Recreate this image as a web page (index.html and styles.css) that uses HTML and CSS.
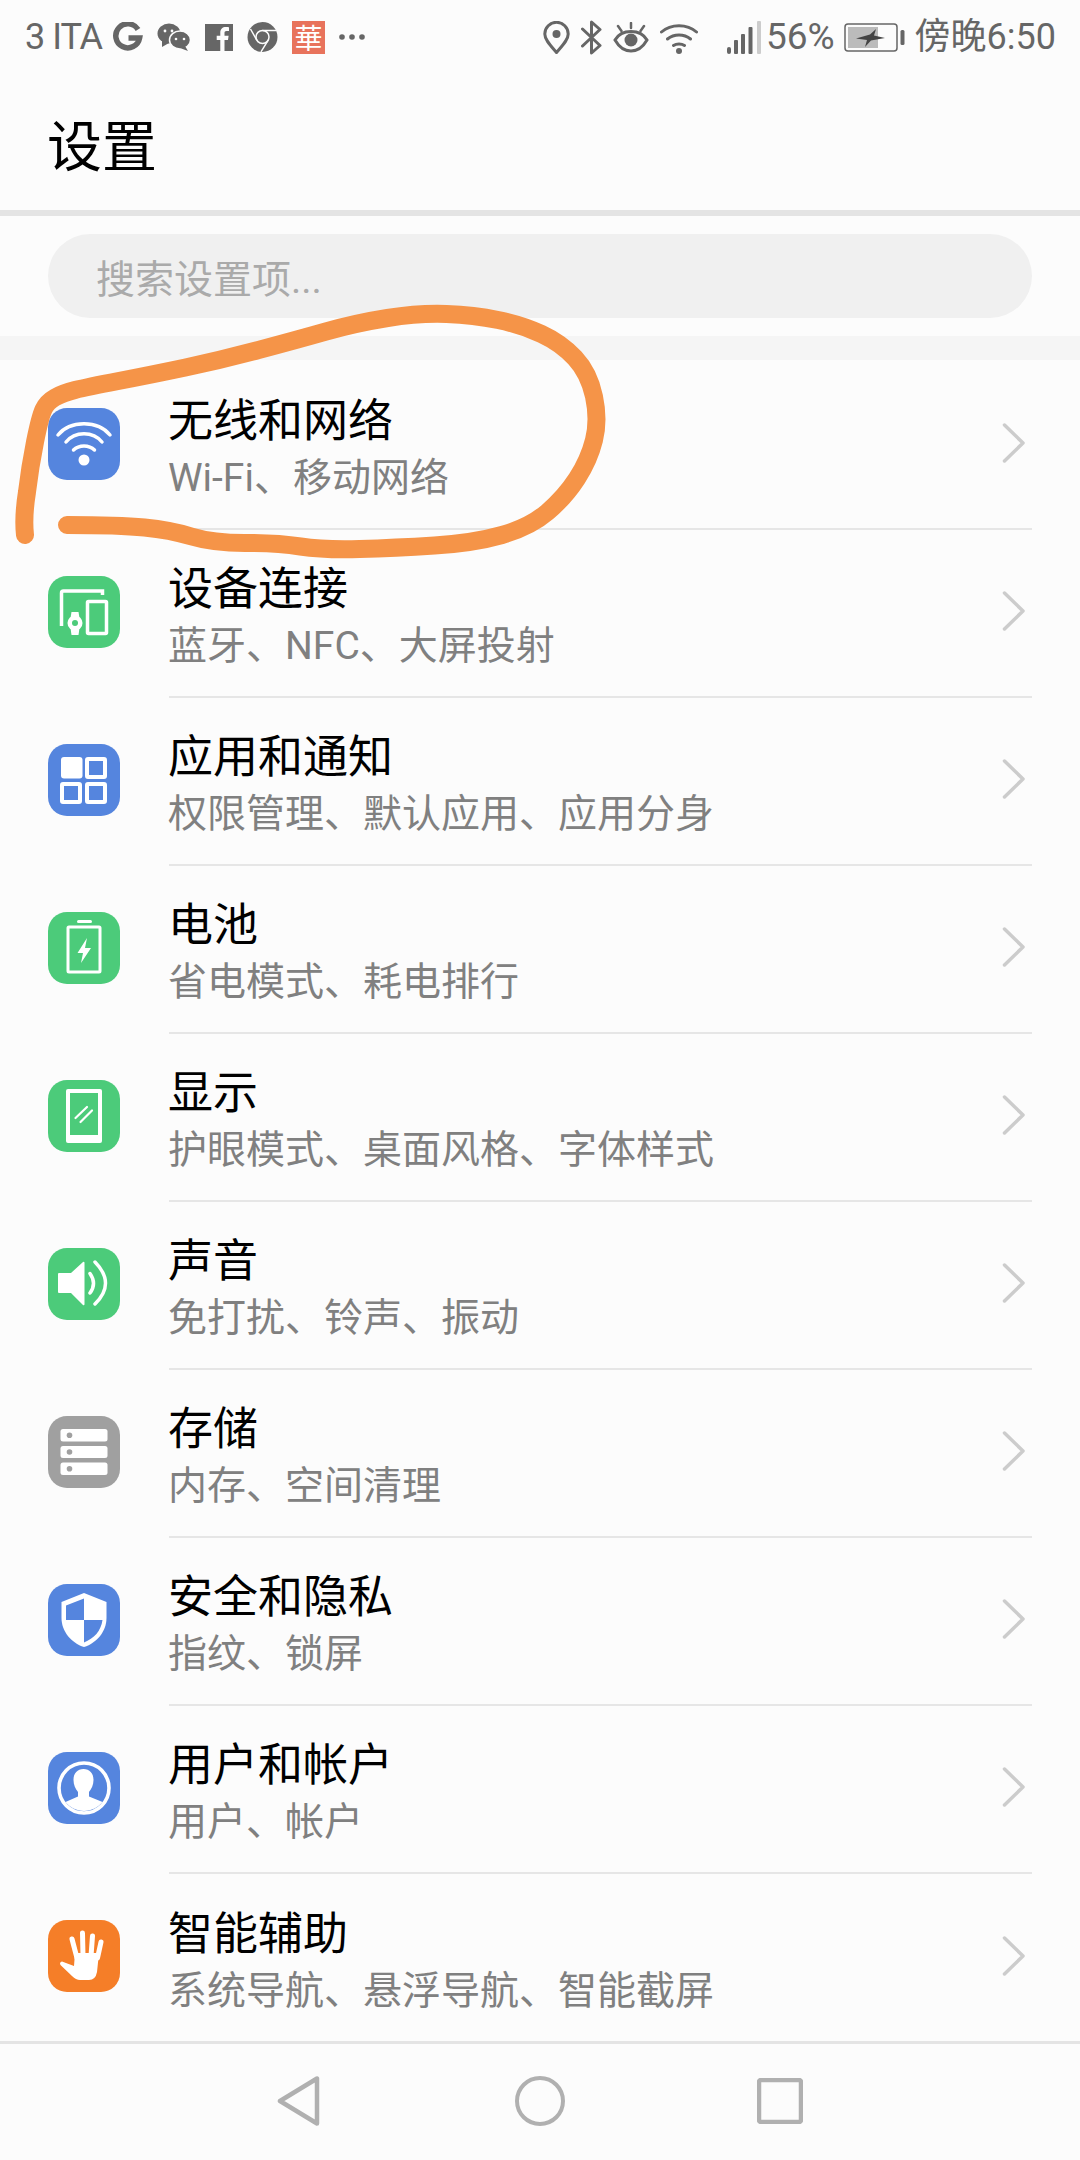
FILE: index.html
```html
<!DOCTYPE html>
<html lang="zh-CN">
<head>
<meta charset="utf-8">
<title>设置</title>
<link rel="stylesheet" href="styles.css">
</head>
<body>
<div class="page">
  <div class="statusbar">
    <div class="st-group st-left">
      <span class="st-text st-carrier">3 ITA</span>
      <svg class="si si-g" viewBox="0 0 30 30"><path d="M25 7.500A12 12 0 1 0 26.600 16H15.500" fill="none" stroke="#666" stroke-width="5.500"/></svg>
      <svg class="si si-wc" viewBox="0 0 34 28"><ellipse cx="12" cy="10.500" rx="11.500" ry="10" fill="#666"/><path d="M5 17l0 7 7-4z" fill="#666"/><ellipse cx="23" cy="17" rx="10.500" ry="9" fill="#666" stroke="#fcfcfc" stroke-width="1.500"/><path d="M28 23l3 5-8-3z" fill="#666"/><circle cx="8" cy="8" r="1.400" fill="#fcfcfc"/><circle cx="15" cy="8" r="1.400" fill="#fcfcfc"/><circle cx="19" cy="16" r="1.300" fill="#fcfcfc"/><circle cx="27" cy="16" r="1.300" fill="#fcfcfc"/></svg>
      <svg class="si si-fb" viewBox="0 0 28 27"><rect width="28" height="27" fill="#666"/><path d="M19.500 27V16h3.500l.6-4.300h-4.100V9c0-1.300.4-2.100 2.100-2.100H24V3.200c-.5 0-1.700-.2-3.200-.2-3.200 0-5.500 2-5.500 5.600v3.100h-3.600V16h3.600v11z" fill="#fcfcfc"/></svg>
      <svg class="si si-ch" viewBox="0 0 31 30"><circle cx="15.500" cy="15" r="15" fill="#666"/><circle cx="15.500" cy="15" r="6.500" fill="none" stroke="#fcfcfc" stroke-width="1.500"/><path d="M15.500 8.500H29.500M9.800 18.200L3.500 7M21.200 18.200L14 29.800" stroke="#fcfcfc" stroke-width="1.500" fill="none"/></svg>
      <span class="st-red">華</span>
      <svg class="si si-dots" viewBox="0 0 26 6"><circle cx="3" cy="3" r="2.800" fill="#666"/><circle cx="13" cy="3" r="2.800" fill="#666"/><circle cx="23" cy="3" r="2.800" fill="#666"/></svg>
    </div>
    <div class="st-group st-right">
      <svg class="si si-pin" viewBox="0 0 27 33"><path d="M13.500 31.500C8 25 1.800 19 1.800 13a11.700 11.700 0 0 1 23.400 0c0 6-6.200 12-11.700 18.500z" fill="none" stroke="#666" stroke-width="3"/><circle cx="13.500" cy="13" r="4" fill="#666"/></svg>
      <svg class="si si-bt" viewBox="0 0 21 35"><path d="M1.500 9L19 25.500 10.500 33V2L19 9.500 1.500 26" fill="none" stroke="#666" stroke-width="3" stroke-linejoin="round" stroke-linecap="round"/></svg>
      <svg class="si si-eye" viewBox="0 0 36 31"><path d="M2 18C6 11 12 9.500 18 9.500S30 11 34 18c-4 7-10 11-16 11S6 25 2 18z" fill="none" stroke="#666" stroke-width="3"/><circle cx="18" cy="18" r="6.500" fill="#666"/><path d="M18 1V6M5 4L8.500 9M31 4L27.500 9" stroke="#666" stroke-width="2.500" stroke-linecap="round"/></svg>
      <svg class="si si-wifi" viewBox="0 0 38 33"><path d="M1.500 11C11 2.500 27 2.500 36.500 11M7.500 18C14 12.500 24 12.500 30.500 18M13.500 24.500C16.500 22.500 21.500 22.500 24.500 24.500" fill="none" stroke="#666" stroke-width="3" stroke-linecap="round"/><circle cx="19" cy="30" r="3" fill="#666"/></svg>
      <svg class="si si-sig" viewBox="0 0 35 33"><rect x="0" y="26" width="4" height="7" rx="2" fill="#666"/><rect x="7" y="19" width="4" height="14" rx="1" fill="#666"/><rect x="14" y="13" width="4" height="20" rx="1" fill="#666"/><rect x="21.500" y="6" width="4" height="27" rx="1" fill="#666"/><rect x="30" y="0" width="4" height="33" rx="1" fill="#ccc"/></svg>
      <span class="st-text st-pct">56%</span>
      <svg class="si si-bat" viewBox="0 0 62 29"><rect x="1" y="1" width="52" height="27" rx="3" fill="none" stroke="#666" stroke-width="1.500"/><rect x="4" y="4" width="30" height="21" fill="#bbb"/><path d="M12 15.500L26 11.500 32 6 30 12.500 41 15 27 17.500 21 24 23 17z" fill="#444"/><rect x="56.500" y="7" width="4" height="15" rx="1.500" fill="#666"/></svg>
      <span class="st-text st-time">傍晚6:50</span>
    </div>
  </div>

  <div class="titlebar"><h1 class="page-title">设置</h1></div>

  <div class="searchwrap"><div class="search">搜索设置项...</div></div>
  <div class="band"></div>

  <ul class="list">
    <li class="row">
      <svg class="ico" viewBox="0 0 72 72"><rect width="72" height="72" rx="19" fill="#5585de"/><path d="M10 27C22 12 50 12 62 27M18 34C27 23 45 23 54 34M25.500 42C31 36.500 41 36.500 46.500 42" fill="none" stroke="#fff" stroke-width="3.500" stroke-linecap="round"/><circle cx="36" cy="52" r="5.500" fill="#fff"/></svg>
      <div class="body"><div class="txt"><div class="t">无线和网络</div><div class="s">Wi-Fi、移动网络</div></div><svg class="chev" viewBox="0 0 24 40"><path d="M2.500 2L21 20 2.500 38" fill="none" stroke="#ccc" stroke-width="3.500" stroke-linecap="round" stroke-linejoin="round"/></svg></div>
    </li>
    <li class="row">
      <svg class="ico" viewBox="0 0 72 72"><rect width="72" height="72" rx="19" fill="#4ccb7a"/><path d="M13.500 50V17Q13.500 15 15.500 15H54.500V19" fill="none" stroke="#fff" stroke-width="3.500"/><rect x="39.500" y="25.500" width="19" height="32" rx="1" fill="none" stroke="#fff" stroke-width="3.500"/><path d="M23.500 36h7l1 6v10l-1 7h-7l-1-7V42z" fill="#fff"/><circle cx="27" cy="47" r="7.500" fill="#fff"/><circle cx="27" cy="47" r="3" fill="#4ccb7a"/></svg>
      <div class="body"><div class="txt"><div class="t">设备连接</div><div class="s">蓝牙、NFC、大屏投射</div></div><svg class="chev" viewBox="0 0 24 40"><path d="M2.500 2L21 20 2.500 38" fill="none" stroke="#ccc" stroke-width="3.500" stroke-linecap="round" stroke-linejoin="round"/></svg></div>
    </li>
    <li class="row">
      <svg class="ico" viewBox="0 0 72 72"><rect width="72" height="72" rx="19" fill="#5585de"/><rect x="13" y="13" width="21.500" height="21.500" rx="3" fill="#fff"/><rect x="39" y="15" width="18" height="18" rx="1" fill="none" stroke="#fff" stroke-width="4"/><rect x="14" y="40" width="18" height="18" rx="1" fill="none" stroke="#fff" stroke-width="4"/><rect x="39" y="40" width="18" height="18" rx="1" fill="none" stroke="#fff" stroke-width="4"/></svg>
      <div class="body"><div class="txt"><div class="t">应用和通知</div><div class="s">权限管理、默认应用、应用分身</div></div><svg class="chev" viewBox="0 0 24 40"><path d="M2.500 2L21 20 2.500 38" fill="none" stroke="#ccc" stroke-width="3.500" stroke-linecap="round" stroke-linejoin="round"/></svg></div>
    </li>
    <li class="row">
      <svg class="ico" viewBox="0 0 72 72"><rect width="72" height="72" rx="19" fill="#4ccb7a"/><rect x="29" y="8" width="15" height="3" rx="1.500" fill="#fff"/><rect x="20" y="15" width="32" height="45" rx="1" fill="none" stroke="#fff" stroke-width="3"/><path d="M39 26L29.500 41h5.500l-2 10 10-15h-6z" fill="#fff"/></svg>
      <div class="body"><div class="txt"><div class="t">电池</div><div class="s">省电模式、耗电排行</div></div><svg class="chev" viewBox="0 0 24 40"><path d="M2.500 2L21 20 2.500 38" fill="none" stroke="#ccc" stroke-width="3.500" stroke-linecap="round" stroke-linejoin="round"/></svg></div>
    </li>
    <li class="row">
      <svg class="ico" viewBox="0 0 72 72"><rect width="72" height="72" rx="19" fill="#4ccb7a"/><rect x="18" y="9" width="36" height="54" rx="2" fill="#fff"/><rect x="22" y="13" width="28" height="42" fill="#4ccb7a"/><path d="M27.500 38L39 27M32.500 42L44 30.500" stroke="#fff" stroke-width="2.200" stroke-linecap="round"/></svg>
      <div class="body"><div class="txt"><div class="t">显示</div><div class="s">护眼模式、桌面风格、字体样式</div></div><svg class="chev" viewBox="0 0 24 40"><path d="M2.500 2L21 20 2.500 38" fill="none" stroke="#ccc" stroke-width="3.500" stroke-linecap="round" stroke-linejoin="round"/></svg></div>
    </li>
    <li class="row">
      <svg class="ico" viewBox="0 0 72 72"><rect width="72" height="72" rx="19" fill="#4ccb7a"/><path d="M10 26Q10 25 11 25H23L35 14Q36.500 13 36.500 15V56Q36.500 58 35 57L23 45H11Q10 45 10 44z" fill="#fff"/><path d="M42 25.500Q49 35.500 42 45M47 14Q68 35.500 47 56" fill="none" stroke="#fff" stroke-width="3.500" stroke-linecap="round"/></svg>
      <div class="body"><div class="txt"><div class="t">声音</div><div class="s">免打扰、铃声、振动</div></div><svg class="chev" viewBox="0 0 24 40"><path d="M2.500 2L21 20 2.500 38" fill="none" stroke="#ccc" stroke-width="3.500" stroke-linecap="round" stroke-linejoin="round"/></svg></div>
    </li>
    <li class="row">
      <svg class="ico" viewBox="0 0 72 72"><rect width="72" height="72" rx="19" fill="#a0a0a0"/><rect x="12.500" y="13" width="47" height="12.500" rx="2.500" fill="#fff"/><rect x="12.500" y="30" width="47" height="12" rx="2.500" fill="#fff"/><rect x="12.500" y="46.500" width="47" height="12.500" rx="2.500" fill="#fff"/><circle cx="21.500" cy="19.300" r="2.800" fill="#a0a0a0"/><circle cx="21.500" cy="36" r="2.800" fill="#a0a0a0"/><circle cx="21.500" cy="52.700" r="2.800" fill="#a0a0a0"/></svg>
      <div class="body"><div class="txt"><div class="t">存储</div><div class="s">内存、空间清理</div></div><svg class="chev" viewBox="0 0 24 40"><path d="M2.500 2L21 20 2.500 38" fill="none" stroke="#ccc" stroke-width="3.500" stroke-linecap="round" stroke-linejoin="round"/></svg></div>
    </li>
    <li class="row">
      <svg class="ico" viewBox="0 0 72 72"><rect width="72" height="72" rx="19" fill="#5585de"/><path d="M36 9L58.500 18V34C58.500 47 49 59 36 63C23 59 13.500 47 13.500 34V18z" fill="#fff"/><path d="M36 14.500V36H18V21.500zM36 36H54.500C53 47 46 54.500 36 58.500z" fill="#5585de"/></svg>
      <div class="body"><div class="txt"><div class="t">安全和隐私</div><div class="s">指纹、锁屏</div></div><svg class="chev" viewBox="0 0 24 40"><path d="M2.500 2L21 20 2.500 38" fill="none" stroke="#ccc" stroke-width="3.500" stroke-linecap="round" stroke-linejoin="round"/></svg></div>
    </li>
    <li class="row">
      <svg class="ico" viewBox="0 0 72 72"><rect width="72" height="72" rx="19" fill="#5585de"/><circle cx="36" cy="36" r="25" fill="none" stroke="#fff" stroke-width="3.600"/><path d="M17.500 50L30 44.500V40C27.500 37 25.500 33 25.500 28C25.500 21 29.500 17 35.500 17S45.500 21 45.500 28C45.500 33 43.500 37 41 40V44.500L54.500 50C50 55.500 43.500 59 36 59S22 55.500 17.500 50z" fill="#fff"/></svg>
      <div class="body"><div class="txt"><div class="t">用户和帐户</div><div class="s">用户、帐户</div></div><svg class="chev" viewBox="0 0 24 40"><path d="M2.500 2L21 20 2.500 38" fill="none" stroke="#ccc" stroke-width="3.500" stroke-linecap="round" stroke-linejoin="round"/></svg></div>
    </li>
    <li class="row">
      <svg class="ico" viewBox="0 0 72 72"><rect width="72" height="72" rx="19" fill="#f57e28"/><path d="M24 19L29 38M34.500 13L35 36M44.500 16L43 36M53 22L49.500 38" stroke="#fff" stroke-width="5" stroke-linecap="round"/><path d="M27 33H51L49 52Q47.500 60 41 60H32Q28 60 24 56L12.500 45Q11 42.500 14 41.500L26 46z" fill="#fff"/></svg>
      <div class="body last"><div class="txt"><div class="t">智能辅助</div><div class="s">系统导航、悬浮导航、智能截屏</div></div><svg class="chev" viewBox="0 0 24 40"><path d="M2.500 2L21 20 2.500 38" fill="none" stroke="#ccc" stroke-width="3.500" stroke-linecap="round" stroke-linejoin="round"/></svg></div>
    </li>
  </ul>

  <nav class="navbar">
    <svg class="nav-back" viewBox="0 0 44 52"><path d="M40 3.500V48.500L3 26z" fill="none" stroke="#b0b0b0" stroke-width="4.500" stroke-linejoin="round"/></svg>
    <svg class="nav-home" viewBox="0 0 50 50"><circle cx="25" cy="25" r="23" fill="none" stroke="#b0b0b0" stroke-width="4"/></svg>
    <svg class="nav-rec" viewBox="0 0 46 46"><rect x="2" y="2" width="42" height="42" rx="2" fill="none" stroke="#b0b0b0" stroke-width="4.500"/></svg>
  </nav>

  <svg class="scribble" viewBox="0 0 1080 2160"><path d="M25 535Q23 517 27 492Q30 467 35 442Q40 417 43.500 409.500Q47 402 55 397.500Q63 393 75 390Q87 387 118.500 381Q150 375 185.500 367.500Q221 360 258.500 350Q296 340 326 331.500Q356 323 387.500 318Q419 313 446.500 314Q474 315 498 320Q522 325 541.500 334Q561 343 575 358Q589 373 594 396.500Q599 420 594 440Q589 460 577 478.500Q565 497 547.500 512Q530 527 502 535Q474 543 434.500 545.500Q395 548 359.500 549Q324 550 300.500 546.500Q277 543 245 543Q213 543 191.500 536.500Q170 530 144.500 527.500Q119 525 67 525" fill="none" stroke="#f59448" stroke-width="18" stroke-linecap="round" stroke-linejoin="round"/></svg>
</div>
</body>
</html>
```

FILE: styles.css
```css
* { box-sizing: border-box; }
html, body { margin: 0; padding: 0; }
body {
  background: #fcfcfc;
  font-family: Roboto, "Noto Sans CJK SC", sans-serif;
}
.page {
  position: relative;
  width: 1080px;
  height: 2160px;
  overflow: hidden;
  display: flex;
  flex-direction: column;
}

/* status bar */
.statusbar {
  height: 72px;
  padding: 2px 24px 0 25px;
  display: flex;
  justify-content: space-between;
  align-items: center;
  color: #666;
  flex: none;
}
.st-group { display: flex; align-items: center; }
.st-left { gap: 14px; }
.st-right { gap: 11px; }
.st-text { font-size: 36px; line-height: 70px; white-space: nowrap; }
.st-carrier { margin-right: -3px; letter-spacing: -1px; }
.st-pct { font-size: 37px; margin-right: -2px; }
.si { display: block; flex: none; }
.si-g { width: 30px; height: 30px; }
.si-wc { width: 34px; height: 28px; }
.si-fb { width: 28px; height: 27px; }
.si-ch { width: 31px; height: 30px; }
.si-dots { width: 26px; height: 6px; }
.si-pin { width: 27px; height: 33px; }
.si-bt { width: 21px; height: 35px; }
.si-eye { width: 36px; height: 31px; }
.si-wifi { width: 38px; height: 33px; }
.si-sig { width: 35px; height: 33px; margin-left: 18px; margin-right: -7px; }
.si-bat { width: 62px; height: 29px; margin-right: -2px; }
.st-red {
  width: 33px;
  height: 33px;
  background: #e8735c;
  color: #fff;
  font-size: 28px;
  line-height: 33px;
  text-align: center;
  font-family: "Noto Sans CJK TC", sans-serif;
}

/* title */
.titlebar {
  height: 144px;
  padding: 2px 47px 0;
  display: flex;
  align-items: center;
  border-bottom: 6px solid #e4e4e4;
  flex: none;
}
.page-title {
  margin: 0;
  font-size: 55px;
  font-weight: 400;
  color: #000;
}

/* search */
.searchwrap { padding: 18px 48px; flex: none; }
.search {
  height: 84px;
  border-radius: 42px;
  background: #f0f0f0;
  padding: 0 48px;
  display: flex;
  align-items: center;
  font-size: 39px;
  color: #aaa;
}
.band { height: 24px; background: #f5f5f5; flex: none; }

/* list */
.list { margin: 0; padding: 2px 0 0; list-style: none; flex: none; }
.row {
  height: 168px;
  padding: 0 48px;
  display: flex;
  align-items: stretch;
  gap: 49px;
}
.ico { width: 72px; height: 72px; flex: none; align-self: center; margin-top: -4px; }
.body {
  flex: 1;
  display: flex;
  align-items: center;
  justify-content: space-between;
  border-bottom: 2px solid #e6e6e6;
  padding-right: 6px;
}
.body.last { border-bottom: none; }
.txt { display: flex; flex-direction: column; padding-top: 8px; margin-left: -1px; }
.t { font-size: 45px; line-height: 58px; color: #000; }
.s { font-size: 39px; line-height: 54px; color: #808080; }
.chev { width: 24px; height: 40px; flex: none; margin-top: -4px; }

/* nav */
.navbar {
  flex: 1;
  margin-top: -1px;
  border-top: 3px solid #e4e4e4;
  display: grid;
  grid-template-columns: repeat(3, 240px);
  justify-content: center;
  align-items: center;
  justify-items: center;
  padding-bottom: 3px;
}
.nav-back { width: 44px; height: 52px; margin-left: -2px; }
.nav-home { width: 50px; height: 50px; }
.nav-rec { width: 46px; height: 46px; }

/* hand-drawn annotation over the first row */
.scribble {
  position: absolute;
  left: 0;
  top: 0;
  width: 1080px;
  height: 2160px;
  pointer-events: none;
}
```
